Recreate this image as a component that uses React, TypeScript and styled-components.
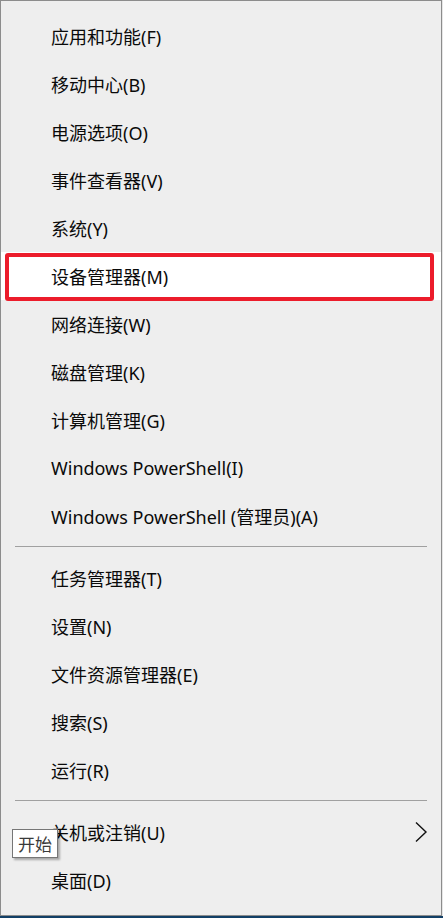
import React from 'react';
import styled, {createGlobalStyle} from "styled-components";

const GlobalStyle = createGlobalStyle`
  html, body {
    margin: 0;
    padding: 0;
  }
  body {
    font-family: "Noto Sans", "Noto Sans CJK SC", sans-serif;
  }
`

type ItemType = {
    label: string
    active?: boolean
    submenu?: boolean
}

const groups: ItemType[][] = [
    [
        {label: "应用和功能(F)"},
        {label: "移动中心(B)"},
        {label: "电源选项(O)"},
        {label: "事件查看器(V)"},
        {label: "系统(Y)"},
        {label: "设备管理器(M)", active: true},
        {label: "网络连接(W)"},
        {label: "磁盘管理(K)"},
        {label: "计算机管理(G)"},
        {label: "Windows PowerShell(I)"},
        {label: "Windows PowerShell (管理员)(A)"},
    ],
    [
        {label: "任务管理器(T)"},
        {label: "设置(N)"},
        {label: "文件资源管理器(E)"},
        {label: "搜索(S)"},
        {label: "运行(R)"},
    ],
    [
        {label: "关机或注销(U)", submenu: true},
        {label: "桌面(D)"},
    ],
]

const Chevron = () => (
    <ChevronIcon width="14" height="22" viewBox="0 0 14 22">
        <polyline points="2,1.5 12,11 2,20.5" fill="none" stroke="#111" strokeWidth="1.4"/>
    </ChevronIcon>
)

export default function App() {
    return (
        <Desktop>
            <GlobalStyle/>
            <Menu>
                {groups.map((group, gi) => (
                    <React.Fragment key={gi}>
                        {gi > 0 && <Separator/>}
                        {group.map(item => (
                            <Row key={item.label} active={item.active}>
                                <Label>{item.label}</Label>
                                {item.submenu && <Chevron/>}
                                {item.active && <Marker/>}
                            </Row>
                        ))}
                    </React.Fragment>
                ))}
                <Tooltip>开始</Tooltip>
            </Menu>
        </Desktop>
    );
}

const Desktop = styled.div`
  width: 443px;
  height: 918px;
  background: linear-gradient(to bottom, #e6e6e6 916px, #123f66 916px);
  overflow: hidden;
`

const Menu = styled.div`
  position: relative;
  box-sizing: border-box;
  width: 442px;
  height: 916px;
  padding: 11px 0 0;
  background: #eeeeee;
  border: 1px solid #8c8c8c;
  display: flex;
  flex-direction: column;
`

const Row = styled.div<{ active?: boolean }>`
  position: relative;
  height: 48px;
  flex-shrink: 0;
  display: flex;
  align-items: center;
  padding: 0 13px 0 50px;
  font-size: 18px;
  color: #0a0a0a;
  background: ${props => props.active ? "#ffffff" : "transparent"};
  white-space: nowrap;
`

const Label = styled.span`
  flex: 1;
`

const Marker = styled.div`
  position: absolute;
  left: 4px;
  right: 7px;
  top: 1px;
  bottom: -1px;
  border: 4px solid #ec1c2b;
  border-radius: 3px;
`

const ChevronIcon = styled.svg`
  flex-shrink: 0;
`

const Separator = styled.div`
  height: 1px;
  flex-shrink: 0;
  margin: 6px 14px 7px;
  background: #a0a0a0;
`

const Tooltip = styled.div`
  position: absolute;
  left: 11px;
  top: 828px;
  box-sizing: border-box;
  height: 29px;
  padding: 0 5px;
  display: flex;
  align-items: center;
  font-family: "Noto Sans CJK SC", sans-serif;
  font-size: 17px;
  color: #3a3a3a;
  background: #ffffff;
  border: 1px solid #767676;
  box-shadow: 2px 2px 2px rgba(0, 0, 0, 0.3);
`
